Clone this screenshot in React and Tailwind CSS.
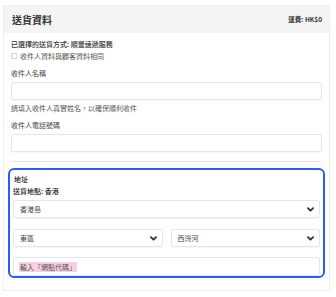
import React from "react";

const Chevron = () => (
  <svg width="7" height="5" viewBox="0 0 10 7" className="shrink-0">
    <path d="M1.3 1.5 L5 5.2 L8.7 1.5" fill="none" stroke="#333" strokeWidth="2.6" strokeLinecap="round" strokeLinejoin="round" />
  </svg>
);

const Select = ({ label, className = "" }) => (
  <div className={`h-[18px] border border-[#e6e6e6] rounded-[2px] bg-white flex items-center justify-between pl-[6px] pr-[5px] shadow-[0_1px_1px_rgba(0,0,0,0.04)] ${className}`}>
    <span className="text-[7px] text-[#444] leading-none">{label}</span>
    <Chevron />
  </div>
);

export default function App() {
  return (
    <div className="w-[336px] h-[297px] bg-white pt-[5px] pl-[3px]" style={{ fontFamily: '"Noto Sans CJK TC", "Noto Sans", sans-serif' }}>
      <div className="w-[327px] h-[286px] border border-[#efefef] bg-white">
        <div className="h-[27px] bg-[#f4f4f4] flex items-center justify-between pl-[8px] pr-[7px]">
          <span className="text-[10px] font-bold text-[#333] leading-none">送貨資料</span>
          <span className="text-[6.5px] font-bold text-[#333] leading-none">運費: HK$0</span>
        </div>
        <div className="px-[7px] pt-[5px]">
          <div className="text-[7px] font-medium text-[#333] leading-[13px]">已選擇的送貨方式: 順豐速遞服務</div>
          <div className="flex items-center gap-[3px] leading-[12px] -mt-[1px]">
            <span className="w-[6px] h-[6px] border border-[#d5d5d5] inline-block"></span>
            <span className="text-[7px] text-[#555]">收件人資料與顧客資料相同</span>
          </div>
          <div className="text-[7px] text-[#444] leading-[13px] mt-[5px]">收件人名稱</div>
          <div className="h-[18px] border border-[#e6e6e6] rounded-[2px] mt-[2px] shadow-[0_1px_1px_rgba(0,0,0,0.04)]"></div>
          <div className="text-[7px] text-[#555] leading-[13px] mt-[2px]">請填入收件人真實姓名，以確保順利收件</div>
          <div className="text-[7px] text-[#444] leading-[13px] mt-[4px]">收件人電話號碼</div>
          <div className="h-[18px] border border-[#e6e6e6] rounded-[2px] mt-[2px] shadow-[0_1px_1px_rgba(0,0,0,0.04)]"></div>
          <div className="h-px bg-[#e8e8e8] mt-[9px]"></div>
        </div>
        <div className="mx-[4px] mt-[6px] h-[110px] border-2 border-[#2f5cf0] rounded-[6px] pl-[3px] pr-[3px] pt-[3px]">
          <div className="text-[7px] font-medium text-[#222] leading-[12px] pl-[1px]">地址</div>
          <div className="text-[7px] font-medium text-[#222] leading-[12px]">送貨地點: 香港</div>
          <Select label="香港島" className="mt-[3px]" />
          <div className="flex gap-[8px] mt-[11px]">
            <Select label="東區" className="flex-1" />
            <Select label="西灣河" className="flex-1" />
          </div>
          <div className="h-[19px] border border-[#e6e6e6] rounded-[2px] mt-[10px] flex items-center pl-[5px]">
            <span className="text-[7px] text-[#555] bg-[#f9cfe3] leading-[10px] px-[1px]">輸入「網點代碼」</span>
          </div>
        </div>
      </div>
    </div>
  );
}
